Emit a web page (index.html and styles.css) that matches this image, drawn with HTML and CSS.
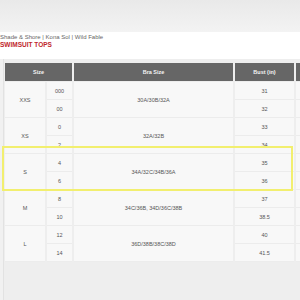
FILE: index.html
```html
<!DOCTYPE html>
<html>
<head>
<meta charset="utf-8">
<link rel="stylesheet" href="styles.css">
</head>
<body>
<div class="banner"></div>
<div class="heading">
  <div class="brands">Shade &amp; Shore | Kona Sol | Wild Fable</div>
  <div class="title">SWIMSUIT TOPS</div>
</div>
<div class="panel">
  <table class="chart">
    <colgroup>
      <col class="c1"><col class="c2"><col class="c3"><col class="c4"><col class="c5">
    </colgroup>
    <thead>
      <tr><th colspan="2">Size</th><th>Bra Size</th><th>Bust (in)</th><th></th></tr>
    </thead>
    <tbody>
      <tr class="grp"><td rowspan="2">XXS</td><td>000</td><td rowspan="2">30A/30B/32A</td><td>31</td><td></td></tr>
      <tr><td>00</td><td>32</td><td></td></tr>
      <tr class="grp"><td rowspan="2">XS</td><td>0</td><td rowspan="2">32A/32B</td><td>33</td><td></td></tr>
      <tr><td>2</td><td>34</td><td></td></tr>
      <tr class="grp"><td rowspan="2">S</td><td>4</td><td rowspan="2">34A/32C/34B/36A</td><td>35</td><td></td></tr>
      <tr><td>6</td><td>36</td><td></td></tr>
      <tr class="grp"><td rowspan="2">M</td><td>8</td><td rowspan="2">34C/36B, 34D/36C/38B</td><td>37</td><td></td></tr>
      <tr><td>10</td><td>38.5</td><td></td></tr>
      <tr class="grp"><td rowspan="2">L</td><td>12</td><td rowspan="2">36D/38B/38C/38D</td><td>40</td><td></td></tr>
      <tr><td>14</td><td>41.5</td><td></td></tr>
    </tbody>
  </table>
  <div class="highlight"></div>
</div>
</body>
</html>
```
FILE: styles.css
```css
html, body {
  margin: 0;
  padding: 0;
  background: #f1f1f1;
  overflow: hidden;
  font-family: "Liberation Sans", Arial, sans-serif;
}
.banner {
  height: 32px;
  background: linear-gradient(180deg, #e9e9e9 0%, #f3f3f3 100%);
}
.heading {
  background: #ffffff;
  height: 27px;
  padding-top: 2px;
  box-sizing: border-box;
}
.brands {
  font-size: 6px;
  line-height: 7px;
  color: #666;
}
.title {
  font-size: 6.5px;
  line-height: 8px;
  font-weight: bold;
  color: #c0272d;
}
.panel {
  position: relative;
  margin-left: 3px;
  background: #eeeeee;
  padding: 4px 0 40px 1px;
  border-left: 1px solid #e2e2e2;
  width: 340px;
}
.chart {
  border-collapse: collapse;
  table-layout: fixed;
  width: 330px;
}
.c1 { width: 41px; }
.c2 { width: 27px; }
.c3 { width: 161px; }
.c4 { width: 61px; }
.c5 { width: 40px; }
.chart th {
  background: #666666;
  color: #f4f4f4;
  font-size: 5.5px;
  font-weight: bold;
  height: 18px;
  padding: 0;
  border: 2px solid #eeeeee;
  border-top: 0;
  border-bottom: 1px solid #eeeeee;
}
.chart th:first-child { border-left: 0; }
.chart td {
  background: #f8f8f8;
  color: #555;
  font-size: 5.5px;
  text-align: center;
  height: 17px;
  padding: 0;
  border: 1px solid #ececec;
  border-left: 2px solid #eeeeee;
  border-right: 2px solid #eeeeee;
}
.chart td:first-child { border-left: 0; }
.chart tr.grp td { border-top: 1px solid #e6e6e6; }
.highlight {
  position: absolute;
  left: -2px;
  top: 87px;
  width: 287px;
  height: 41px;
  border: 2.5px solid #f2ef6f;
}
```
